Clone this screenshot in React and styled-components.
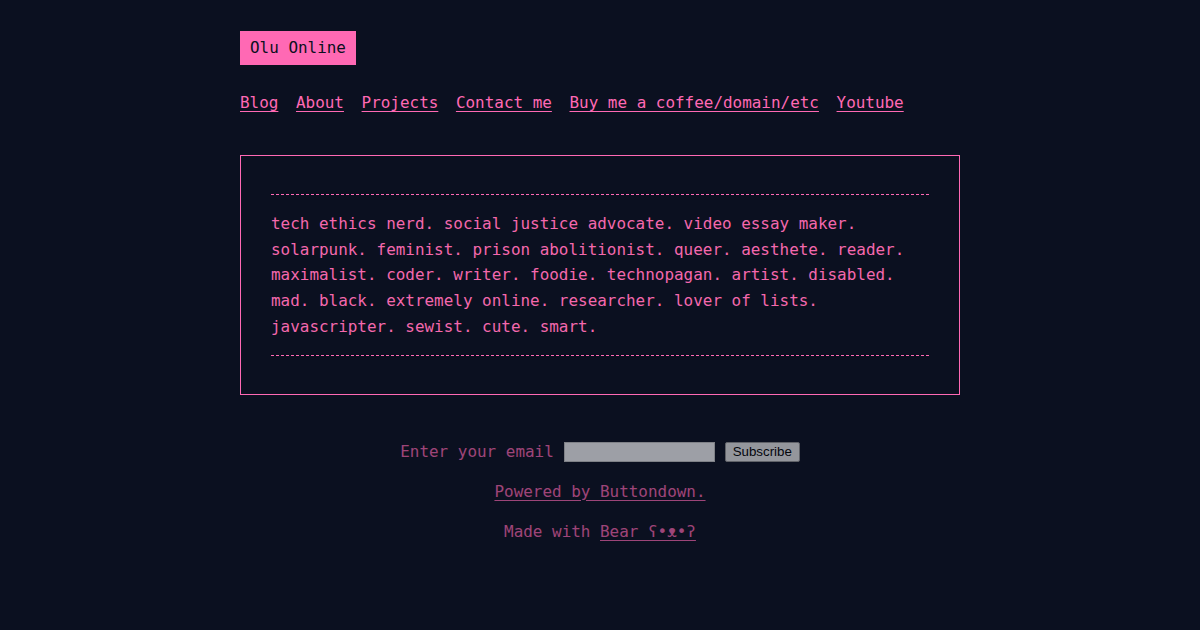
import React from "react";
import styled, { createGlobalStyle } from "styled-components";

const GlobalStyle = createGlobalStyle`
  html, body {
    margin: 0;
    padding: 0;
    background: #0b1020;
  }
  body {
    font-family: "DejaVu Sans Mono", "Liberation Mono", monospace;
    font-size: 15.95px;
    color: #ff69b4;
  }
`;

const Page = styled.main`
  width: 720px;
  margin: 0 auto;
  padding-top: 31px;
  padding-bottom: 60px;
`;

const Title = styled.a`
  display: inline-block;
  background: #ff69b4;
  color: #0b1020;
  padding: 0 10px;
  height: 34px;
  line-height: 34px;
  text-decoration: none;
`;

const Nav = styled.nav`
  display: flex;
  gap: 17.6px;
  margin-top: 25px;
  line-height: 26px;
`;

const NavLink = styled.a`
  color: #ff69b4;
  text-decoration: underline;
  text-underline-offset: 3px;
`;

const Card = styled.section`
  margin-top: 39px;
  border: 1px solid #ff69b4;
  padding: 38px 30px;
`;

const Rule = styled.hr`
  margin: 0;
  border: none;
  border-top: 1px dashed #ff69b4;
`;

const Bio = styled.p`
  margin: 16px 0 15px;
  line-height: 25.7px;
  color: #f468ad;
`;

const Footer = styled.footer`
  margin-top: 47px;
  display: flex;
  flex-direction: column;
  align-items: center;
  gap: 20px;
  opacity: 0.6;
`;

const Row = styled.div`
  display: flex;
  align-items: center;
  height: 20px;
  line-height: 20px;
`;

const EmailInput = styled.input`
  width: 151px;
  height: 20px;
  box-sizing: border-box;
  margin: 0 10px;
  border: 1px solid #ccc;
  background: #fff;
  padding: 0;
`;

const SubmitButton = styled.button`
  height: 20px;
  width: 75px;
  padding: 0;
  font-family: "Liberation Sans", Arial, sans-serif;
  font-size: 13.3px;
  color: #000;
  background: #efefef;
  border: 1px solid #999;
  border-radius: 2px;
`;

const FooterLink = styled.a`
  color: #ff69b4;
  text-decoration: underline;
  text-underline-offset: 3px;
`;

const links = [
  "Blog",
  "About",
  "Projects",
  "Contact me",
  "Buy me a coffee/domain/etc",
  "Youtube",
];

export default function App() {
  return (
    <>
      <GlobalStyle />
      <Page>
        <header>
          <Title href="#">Olu Online</Title>
          <Nav>
            {links.map((l) => (
              <NavLink key={l} href="#">
                {l}
              </NavLink>
            ))}
          </Nav>
        </header>
        <Card>
          <Rule />
          <Bio>
            tech ethics nerd. social justice advocate. video essay maker.
            solarpunk. feminist. prison abolitionist. queer. aesthete. reader.
            maximalist. coder. writer. foodie. technopagan. artist. disabled.
            mad. black. extremely online. researcher. lover of lists.
            javascripter. sewist. cute. smart.
          </Bio>
          <Rule />
        </Card>
        <Footer>
          <Row>
            <label>Enter your email</label>
            <EmailInput type="email" />
            <SubmitButton>Subscribe</SubmitButton>
          </Row>
          <Row>
            <FooterLink href="#">Powered by Buttondown.</FooterLink>
          </Row>
          <Row>
            Made with&nbsp;<FooterLink href="#">Bear ʕ•ᴥ•ʔ</FooterLink>
          </Row>
        </Footer>
      </Page>
    </>
  );
}
